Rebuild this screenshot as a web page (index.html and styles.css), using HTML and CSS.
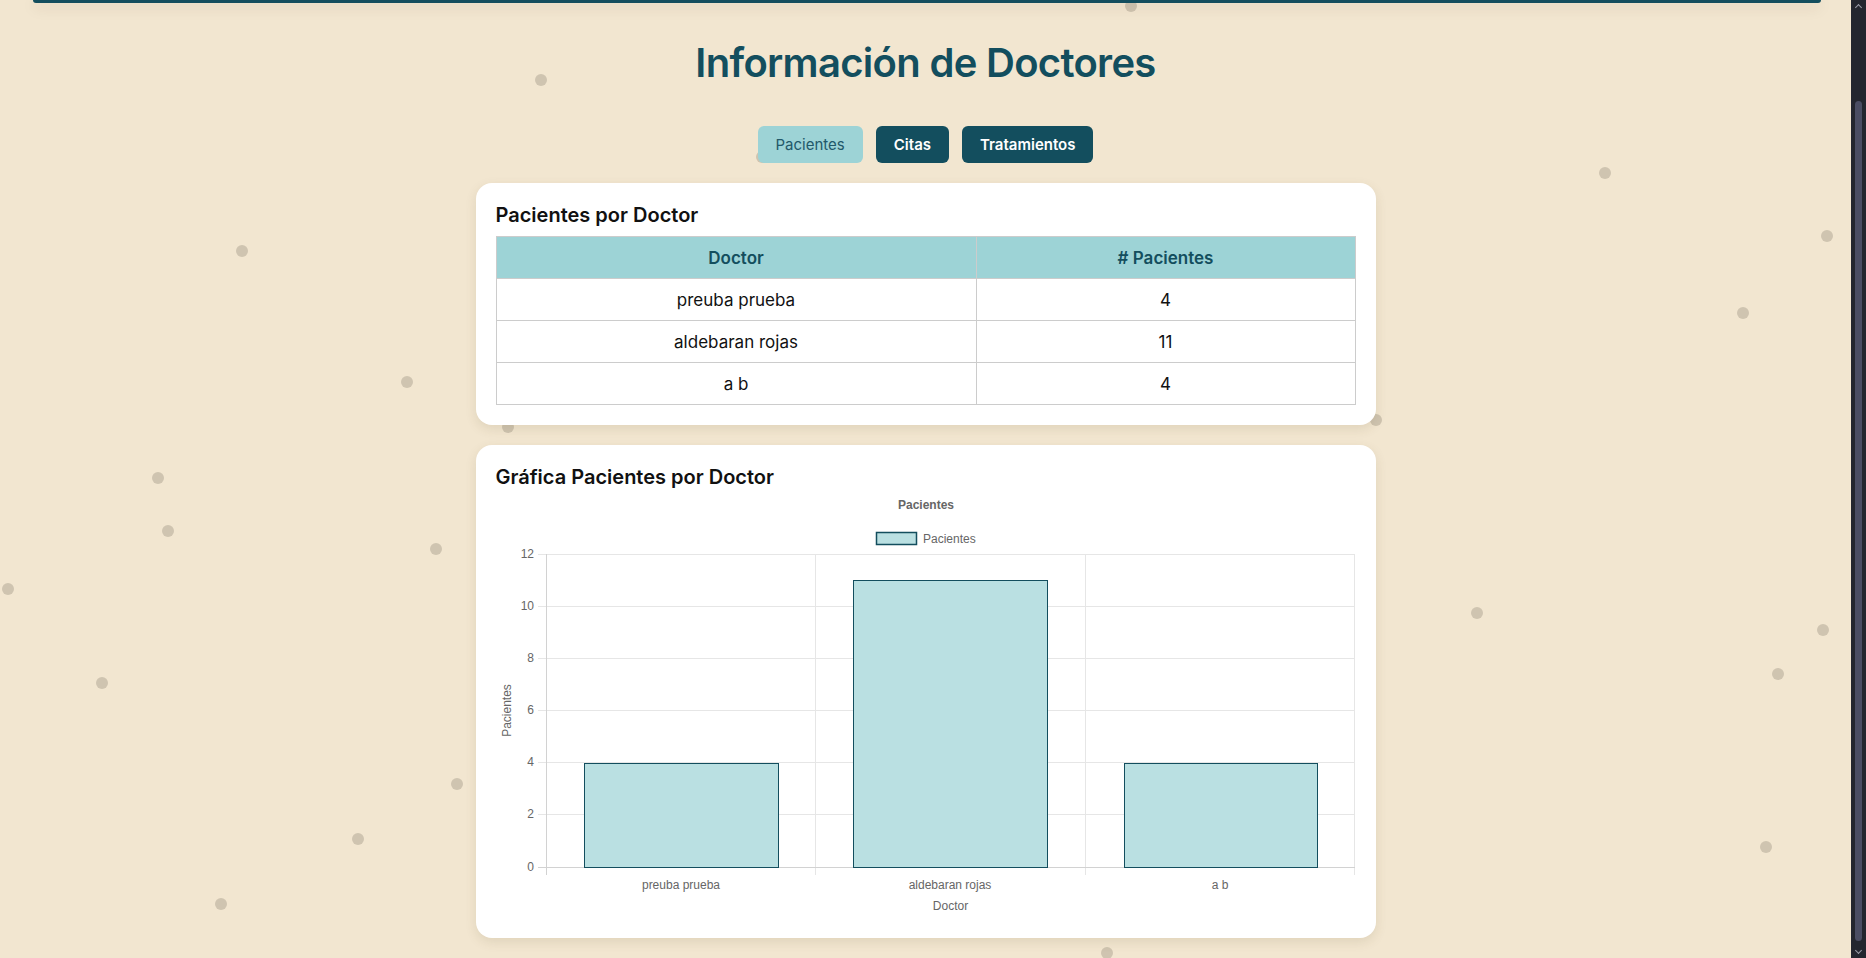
FILE: index.html
```html
<!DOCTYPE html>
<html lang="es">
<head>
<meta charset="utf-8">
<title>Información de Doctores</title>
<link rel="stylesheet" href="styles.css">
</head>
<body>
<div class="page">
  <main class="main">
    <div class="dots">
      <span class="dot d1"></span><span class="dot d2"></span><span class="dot d3"></span><span class="dot d4"></span>
      <span class="dot d5"></span><span class="dot d6"></span><span class="dot d7"></span><span class="dot d8"></span>
      <span class="dot d9"></span><span class="dot d10"></span><span class="dot d11"></span><span class="dot d12"></span>
      <span class="dot d13"></span><span class="dot d14"></span><span class="dot d15"></span><span class="dot d16"></span>
      <span class="dot d17"></span><span class="dot d18"></span><span class="dot d19"></span><span class="dot d20"></span>
      <span class="dot d21"></span><span class="dot d22"></span><span class="dot d23"></span>
    </div>
    <div class="topbar"></div>
    <div class="content">
      <h1 class="page-title">Información de Doctores</h1>
      <nav class="tabs">
        <button class="tab tab-active">Pacientes</button>
        <button class="tab">Citas</button>
        <button class="tab">Tratamientos</button>
      </nav>
      <section class="card">
        <h2 class="card-title">Pacientes por Doctor</h2>
        <table class="data-table">
          <thead>
            <tr><th class="col-doc">Doctor</th><th># Pacientes</th></tr>
          </thead>
          <tbody>
            <tr><td>preuba prueba</td><td>4</td></tr>
            <tr><td>aldebaran rojas</td><td>11</td></tr>
            <tr><td>a b</td><td>4</td></tr>
          </tbody>
        </table>
      </section>
      <section class="card card-chart">
        <h2 class="card-title">Gráfica Pacientes por Doctor</h2>
        <svg class="chart" width="860" height="420" viewBox="0 0 860 420" xmlns="http://www.w3.org/2000/svg">
          <text class="c-title" x="430" y="11" text-anchor="middle">Pacientes</text>
          <rect x="380.5" y="34.5" width="40" height="12" fill="#bae0e2" stroke="#134e5e" stroke-width="1.5"/>
          <text class="c-text" x="427" y="45">Pacientes</text>
          <g stroke="#e6e6e6" stroke-width="1">
            <line x1="42" y1="56.5" x2="859" y2="56.5"/>
            <line x1="42" y1="108.5" x2="859" y2="108.5"/>
            <line x1="42" y1="160.5" x2="859" y2="160.5"/>
            <line x1="42" y1="212.5" x2="859" y2="212.5"/>
            <line x1="42" y1="264.5" x2="859" y2="264.5"/>
            <line x1="42" y1="316.5" x2="859" y2="316.5"/>
            <line x1="319.5" y1="56" x2="319.5" y2="377"/>
            <line x1="589.5" y1="56" x2="589.5" y2="377"/>
            <line x1="858.5" y1="56" x2="858.5" y2="377"/>
          </g>
          <g stroke="#d2d2d2" stroke-width="1">
            <line x1="50.5" y1="56" x2="50.5" y2="377"/>
            <line x1="42" y1="369.5" x2="859" y2="369.5"/>
          </g>
          <g class="c-text" text-anchor="end">
            <text x="38" y="60">12</text>
            <text x="38" y="112">10</text>
            <text x="38" y="164">8</text>
            <text x="38" y="216">6</text>
            <text x="38" y="268">4</text>
            <text x="38" y="320">2</text>
            <text x="38" y="373">0</text>
          </g>
          <g fill="#bae0e2" stroke="#134e5e" stroke-width="1">
            <rect x="88.5" y="265.5" width="194" height="104"/>
            <rect x="357.5" y="82.5" width="194" height="287"/>
            <rect x="628.5" y="265.5" width="193" height="104"/>
          </g>
          <g class="c-text" text-anchor="middle">
            <text x="185" y="391">preuba prueba</text>
            <text x="454" y="391">aldebaran rojas</text>
            <text x="724" y="391">a b</text>
            <text x="454.5" y="412">Doctor</text>
            <text transform="translate(15 212.5) rotate(-90)">Pacientes</text>
          </g>
        </svg>
      </section>
    </div>
  </main>
  <div class="scrollbar">
    <span class="sb-arrow sb-up"></span>
    <span class="sb-thumb"></span>
    <span class="sb-arrow sb-down"></span>
  </div>
</div>
</body>
</html>
```
FILE: styles.css
```css
* { box-sizing: border-box; }
html, body { margin: 0; padding: 0; }
body {
  background: #f2e6d0;
  font-family: Inter, "Open Sans", "Liberation Sans", sans-serif;
  color: #111;
  overflow: hidden;
}
.page {
  display: flex;
  width: 1866px;
  height: 958px;
}
.main {
  position: relative;
  flex: 1;
  height: 958px;
  overflow: hidden;
}
.dots { position: absolute; inset: 0; z-index: 0; }
.dot {
  position: absolute;
  width: 12px;
  height: 12px;
  margin: -6px 0 0 -6px;
  border-radius: 50%;
  background: #cfc4b0;
}
.d1 { left: 1131px; top: 6px; }
.d2 { left: 541px; top: 80px; }
.d3 { left: 1605px; top: 173px; }
.d4 { left: 242px; top: 251px; }
.d5 { left: 1827px; top: 236px; }
.d6 { left: 1743px; top: 313px; }
.d7 { left: 407px; top: 382px; }
.d8 { left: 508px; top: 427px; }
.d9 { left: 1376px; top: 420px; }
.d10 { left: 158px; top: 478px; }
.d11 { left: 168px; top: 531px; }
.d12 { left: 436px; top: 549px; }
.d13 { left: 8px; top: 589px; }
.d14 { left: 1477px; top: 613px; }
.d15 { left: 1823px; top: 630px; }
.d16 { left: 1778px; top: 674px; }
.d17 { left: 102px; top: 683px; }
.d18 { left: 457px; top: 784px; }
.d19 { left: 358px; top: 839px; }
.d20 { left: 221px; top: 904px; }
.d21 { left: 1766px; top: 847px; }
.d22 { left: 1107px; top: 953px; }
.d23 { left: 762px; top: 157px; }

.topbar {
  position: relative;
  z-index: 1;
  height: 3px;
  margin: 0 30px 0 33px;
  background: #134e5e;
  border-radius: 0 0 10px 10px;
  box-shadow: 0 4px 14px rgba(60, 40, 10, 0.18);
}
.content {
  position: relative;
  z-index: 1;
  display: flex;
  flex-direction: column;
  align-items: center;
}
.page-title {
  margin: 36px 0 0;
  font-size: 40px;
  line-height: 48px;
  font-weight: 600;
  color: #134e5e;
  letter-spacing: -0.7px;
}
.tabs {
  display: flex;
  gap: 13px;
  margin: 39px 0 20px;
}
.tab {
  height: 37px;
  padding: 0 18px;
  border: none;
  border-radius: 6px;
  background: #134e5e;
  color: #fff;
  font-family: Inter, "Open Sans", sans-serif;
  font-size: 15px;
  font-weight: 600;
}
.tab-active {
  background: #9dd3d6;
  color: #22596a;
  font-weight: 400;
}
.card {
  width: 900px;
  background: #fff;
  border-radius: 16px;
  padding: 20px;
  box-shadow: 0 4px 12px rgba(90, 70, 30, 0.12);
}
.card + .card { margin-top: 20px; }
.card-title {
  margin: 0 0 9px;
  font-size: 20px;
  line-height: 24px;
  font-weight: 600;
  color: #111;
}
.data-table {
  width: 100%;
  border-collapse: collapse;
  font-size: 17px;
}
.data-table th,
.data-table td {
  border: 1px solid #cccccc;
  height: 42px;
  padding: 0;
  text-align: center;
}
.data-table th {
  background: #9dd3d6;
  color: #134e5e;
  font-weight: 600;
}
.data-table td { color: #111; }
.col-doc { width: 480px; }
.chart { display: block; }
.c-title {
  font-family: "Liberation Sans", Arial, sans-serif;
  font-size: 12px;
  font-weight: 700;
  fill: #666;
}
.c-text, .c-text text {
  font-family: "Liberation Sans", Arial, sans-serif;
  font-size: 12px;
  fill: #666;
}
.scrollbar {
  position: relative;
  width: 15px;
  height: 958px;
  background: #23262f;
}
.sb-thumb {
  position: absolute;
  left: 4px;
  top: 101px;
  width: 7px;
  height: 840px;
  border-radius: 4px;
  background: #4a4d63;
}
.sb-arrow {
  position: absolute;
  left: 5px;
  width: 5px;
  height: 5px;
  border-left: 1px solid #9a9ca8;
  border-top: 1px solid #9a9ca8;
}
.sb-up { top: 5px; transform: rotate(45deg); }
.sb-down { bottom: 5px; transform: rotate(225deg); }
```
